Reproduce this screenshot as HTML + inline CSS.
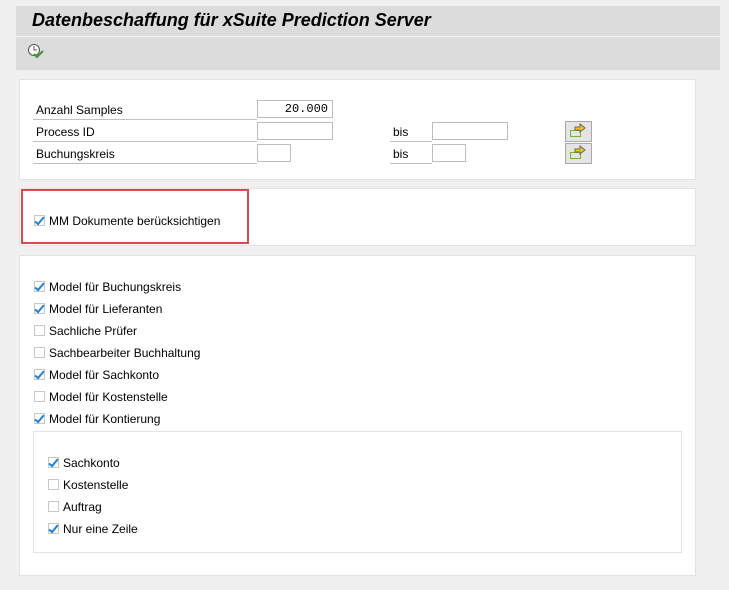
<!DOCTYPE html>
<html><head><meta charset="utf-8"><style>
body{margin:0;width:729px;height:590px;background:#f0f0f0;font-family:"Liberation Sans",Tahoma,sans-serif;font-size:12px;color:#000;position:relative;overflow:hidden}
.a{position:absolute}
.panel{position:absolute;background:#fff;border:1px solid #e2e2e2}
.lbl{position:absolute;border-bottom:1px solid #c0c0c0;height:18px;line-height:18px;padding-left:3px}
.inp{position:absolute;background:#fff;border:1px solid #bdbdbd;height:18px;box-sizing:border-box;font-family:"Liberation Mono",monospace;font-size:12px;text-align:right;padding-right:4px;line-height:16px}
.cb{position:absolute;font-size:12px;line-height:14px;padding-left:15px;height:14px}
.cb:before{content:"";position:absolute;left:0;top:1px;width:9px;height:9px;border:1px solid #c8c8c8;background:#fff}
.cb.on:after{content:"";position:absolute;left:3px;top:1px;width:3px;height:8px;border:solid #1b82d6;border-width:0 2px 2px 0;transform:rotate(40deg)}
.btn{position:absolute;width:27px;height:21px;background:#e4e4e4;border:1px solid #a8a8a8;box-sizing:border-box}
</style></head><body>
<div class="a" style="left:16px;top:6px;width:704px;height:30px;background:#dcdcdc"></div>
<div class="a" style="left:32px;top:8px;font-size:18px;font-weight:bold;font-style:italic;line-height:24px">Datenbeschaffung für xSuite Prediction Server</div>
<div class="a" style="left:16px;top:37px;width:704px;height:33px;background:#dcdcdc"></div>
<svg class="a" style="left:27px;top:43px" width="18" height="16" viewBox="0 0 18 16"><circle cx="7" cy="7" r="5.5" fill="#fff" stroke="#555" stroke-width="1"/><path d="M7 3v4h3" stroke="#555" fill="none"/><path d="M7 11l3 3 6-6" stroke="#3a9a2a" stroke-width="2" fill="none"/></svg>

<div class="panel" style="left:19px;top:79px;width:675px;height:99px"></div>
<div class="lbl" style="left:33px;top:101px;width:221px">Anzahl Samples</div>
<div class="inp" style="left:257px;top:100px;width:76px">20.000</div>
<div class="lbl" style="left:33px;top:123px;width:221px">Process ID</div>
<div class="inp" style="left:257px;top:122px;width:76px"></div>
<div class="lbl" style="left:33px;top:145px;width:221px">Buchungskreis</div>
<div class="inp" style="left:257px;top:144px;width:34px"></div>
<div class="lbl" style="left:390px;top:123px;width:39px">bis</div>
<div class="inp" style="left:432px;top:122px;width:76px"></div>
<div class="lbl" style="left:390px;top:145px;width:39px">bis</div>
<div class="inp" style="left:432px;top:144px;width:34px"></div>
<div class="btn" style="left:565px;top:121px"><svg width="25" height="19"><rect x="4.5" y="8.5" width="10" height="6" fill="none" stroke="#7ab32a"/><path d="M9 5h5V2l5 4-5 4V8H9z" fill="#f5c518" stroke="#666"/></svg></div>
<div class="btn" style="left:565px;top:143px"><svg width="25" height="19"><rect x="4.5" y="8.5" width="10" height="6" fill="none" stroke="#7ab32a"/><path d="M9 5h5V2l5 4-5 4V8H9z" fill="#f5c518" stroke="#666"/></svg></div>

<div class="panel" style="left:19px;top:188px;width:675px;height:56px"></div>
<div class="a" style="left:21px;top:189px;width:224px;height:51px;border:2px solid #d9494f"></div>
<div class="cb on" style="left:34px;top:214px">MM Dokumente berücksichtigen</div>

<div class="panel" style="left:19px;top:255px;width:675px;height:319px"></div>
<div class="cb on" style="left:34px;top:280px">Model für Buchungskreis</div>
<div class="cb on" style="left:34px;top:302px">Model für Lieferanten</div>
<div class="cb" style="left:34px;top:324px">Sachliche Prüfer</div>
<div class="cb" style="left:34px;top:346px">Sachbearbeiter Buchhaltung</div>
<div class="cb on" style="left:34px;top:368px">Model für Sachkonto</div>
<div class="cb" style="left:34px;top:390px">Model für Kostenstelle</div>
<div class="cb on" style="left:34px;top:412px">Model für Kontierung</div>
<div class="panel" style="left:33px;top:431px;width:647px;height:120px"></div>
<div class="cb on" style="left:48px;top:456px">Sachkonto</div>
<div class="cb" style="left:48px;top:478px">Kostenstelle</div>
<div class="cb" style="left:48px;top:500px">Auftrag</div>
<div class="cb on" style="left:48px;top:522px">Nur eine Zeile</div>
</body></html>
